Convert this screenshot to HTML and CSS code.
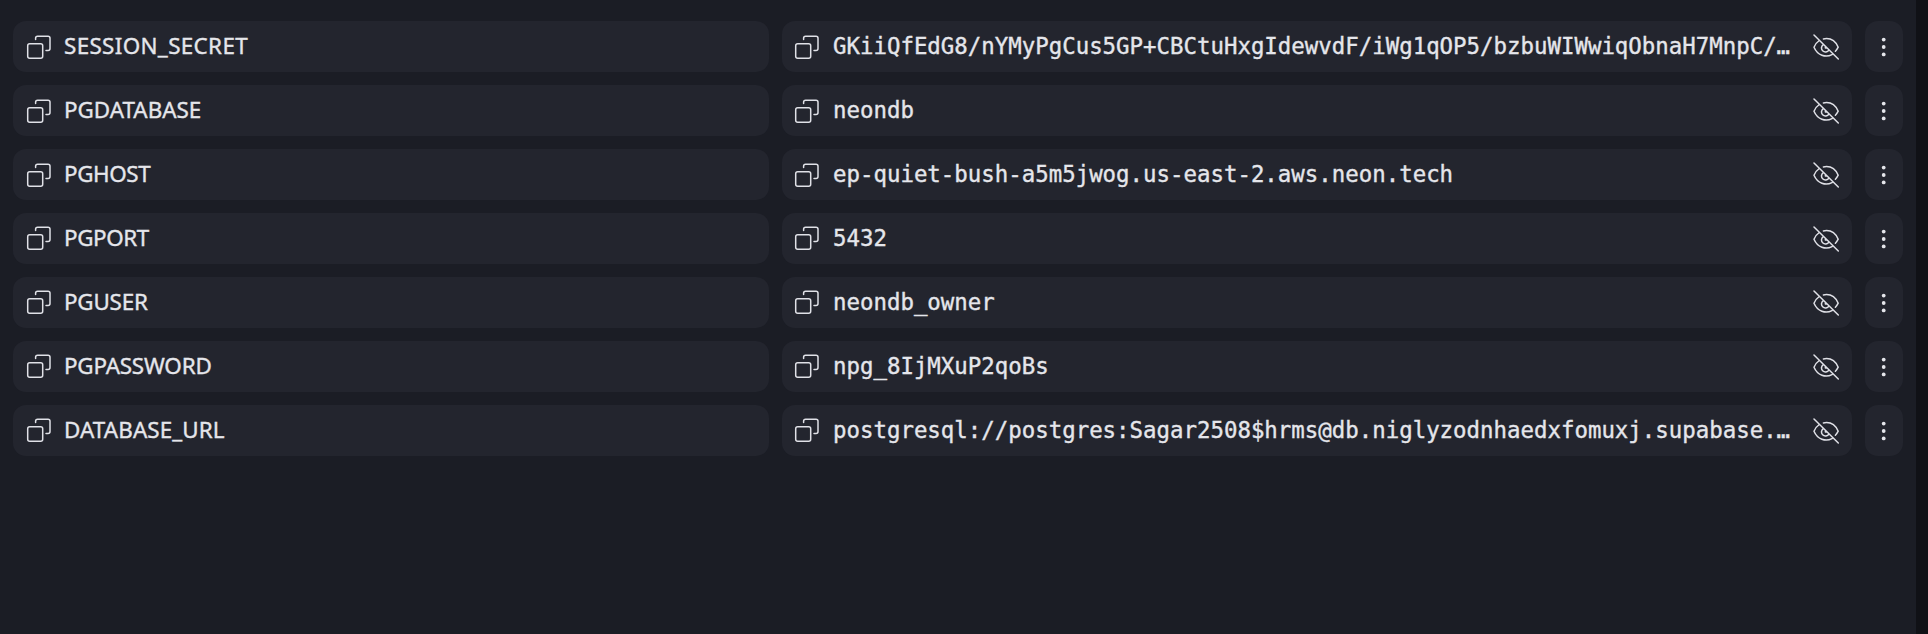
FILE: index.html
```html
<!DOCTYPE html>
<html lang="en">
<head>
<meta charset="utf-8">
<title>Secrets</title>
<link rel="stylesheet" href="styles.css">
</head>
<body>
<svg class="sprite" aria-hidden="true">
  <symbol id="copy" viewBox="0 0 26 26">
    <rect x="1.7" y="9.7" width="15" height="14.6" rx="2"/>
    <path d="M9.6 5.6V4.2a2 2 0 0 1 2-2H22a2 2 0 0 1 2 2v10.3a2 2 0 0 1-2 2h-2"/>
  </symbol>
  <symbol id="eye-off" viewBox="0 0 26 26">
    <path d="M1 1l24.3 24M10.4 4.9C17.6 3.6 22.5 7 25.2 13.2c-.8 1.6-1.6 2.8-2.8 4M6.3 6.5C3.8 8.2 2 10.6 1 13.2 4.5 21.3 12.5 24 19 20.6M10.4 10.6a4 4 0 1 0 5.5 5.5M12.4 12.6v1.5h1.6"/>
  </symbol>
  <symbol id="more" viewBox="0 0 26 26">
    <circle cx="12.700" cy="5.600" r="1.900"/><circle cx="12.700" cy="13" r="1.900"/><circle cx="12.700" cy="20.400" r="1.900"/>
  </symbol>
</svg>
<main class="list">
  <div class="row"><div class="cell"><svg class="icon"><use href="#copy"/></svg><span class="name wide">SESSION_SECRET</span></div><div class="cell secret"><svg class="icon"><use href="#copy"/></svg><span class="value">GKiiQfEdG8/nYMyPgCus5GP+CBCtuHxgIdewvdF/iWg1qOP5/bzbuWIWwiqObnaH7MnpC/…</span><svg class="icon eye"><use href="#eye-off"/></svg></div><div class="cell menu"><svg class="icon dots"><use href="#more"/></svg></div></div>
  <div class="row"><div class="cell"><svg class="icon"><use href="#copy"/></svg><span class="name">PGDATABASE</span></div><div class="cell secret"><svg class="icon"><use href="#copy"/></svg><span class="value">neondb</span><svg class="icon eye"><use href="#eye-off"/></svg></div><div class="cell menu"><svg class="icon dots"><use href="#more"/></svg></div></div>
  <div class="row"><div class="cell"><svg class="icon"><use href="#copy"/></svg><span class="name tight">PGHOST</span></div><div class="cell secret"><svg class="icon"><use href="#copy"/></svg><span class="value">ep-quiet-bush-a5m5jwog.us-east-2.aws.neon.tech</span><svg class="icon eye"><use href="#eye-off"/></svg></div><div class="cell menu"><svg class="icon dots"><use href="#more"/></svg></div></div>
  <div class="row"><div class="cell"><svg class="icon"><use href="#copy"/></svg><span class="name tight">PGPORT</span></div><div class="cell secret"><svg class="icon"><use href="#copy"/></svg><span class="value">5432</span><svg class="icon eye"><use href="#eye-off"/></svg></div><div class="cell menu"><svg class="icon dots"><use href="#more"/></svg></div></div>
  <div class="row"><div class="cell"><svg class="icon"><use href="#copy"/></svg><span class="name snug">PGUSER</span></div><div class="cell secret"><svg class="icon"><use href="#copy"/></svg><span class="value">neondb_owner</span><svg class="icon eye"><use href="#eye-off"/></svg></div><div class="cell menu"><svg class="icon dots"><use href="#more"/></svg></div></div>
  <div class="row"><div class="cell"><svg class="icon"><use href="#copy"/></svg><span class="name snug">PGPASSWORD</span></div><div class="cell secret"><svg class="icon"><use href="#copy"/></svg><span class="value">npg_8IjMXuP2qoBs</span><svg class="icon eye"><use href="#eye-off"/></svg></div><div class="cell menu"><svg class="icon dots"><use href="#more"/></svg></div></div>
  <div class="row"><div class="cell"><svg class="icon"><use href="#copy"/></svg><span class="name loose">DATABASE_URL</span></div><div class="cell secret"><svg class="icon"><use href="#copy"/></svg><span class="value">postgresql://postgres:Sagar2508$hrms@db.niglyzodnhaedxfomuxj.supabase.…</span><svg class="icon eye"><use href="#eye-off"/></svg></div><div class="cell menu"><svg class="icon dots"><use href="#more"/></svg></div></div>
</main>
</body>
</html>
```
FILE: styles.css
```css
* { box-sizing: border-box; }
body {
  margin: 0;
  height: 634px;
  overflow: hidden;
  display: flex;
  background: #101116;
  color: #e5e6eb;
}
.sprite { display: none; }
.list {
  width: 1916px;
  height: 634px;
  padding: 21px 13px;
  display: flex;
  flex-direction: column;
  gap: 13px;
  background: #1b1d25;
}
.row {
  display: grid;
  grid-template-columns: 756px 1070px 38px;
  column-gap: 13px;
  height: 51px;
}
.cell {
  display: flex;
  align-items: center;
  min-width: 0;
  padding: 0 13px;
  border-radius: 13px;
  background: #23252e;
}
.secret { padding-left: 12px; }
.icon {
  flex: none;
  width: 26px;
  height: 26px;
  margin-top: 1px;
  fill: none;
  stroke: #e0e1e7;
  stroke-width: 1.5;
  stroke-linecap: round;
  stroke-linejoin: round;
}
.row:nth-child(n+4) .icon { margin-top: -1px; }
.row:nth-child(n) .eye,
.row:nth-child(n) .dots { margin-top: 1px; }
.menu { padding: 0; justify-content: center; }
.row .dots { fill: #e5e6eb; stroke: none; }
.eye { margin-left: auto; }
.name, .value {
  padding-bottom: 2px;
  white-space: nowrap;
  font-size: 22.4px;
  line-height: 30px;
  -webkit-text-stroke: 0.35px currentColor;
}
.name {
  margin-left: 12px;
  font-family: "Noto Sans", sans-serif;
}
.wide { letter-spacing: 0.35px; }
.loose { letter-spacing: 0.1px; }
.snug { letter-spacing: -0.2px; }
.tight { letter-spacing: -0.4px; }
.value {
  margin-left: 13px;
  font-family: "DejaVu Sans Mono", monospace;
}
```
